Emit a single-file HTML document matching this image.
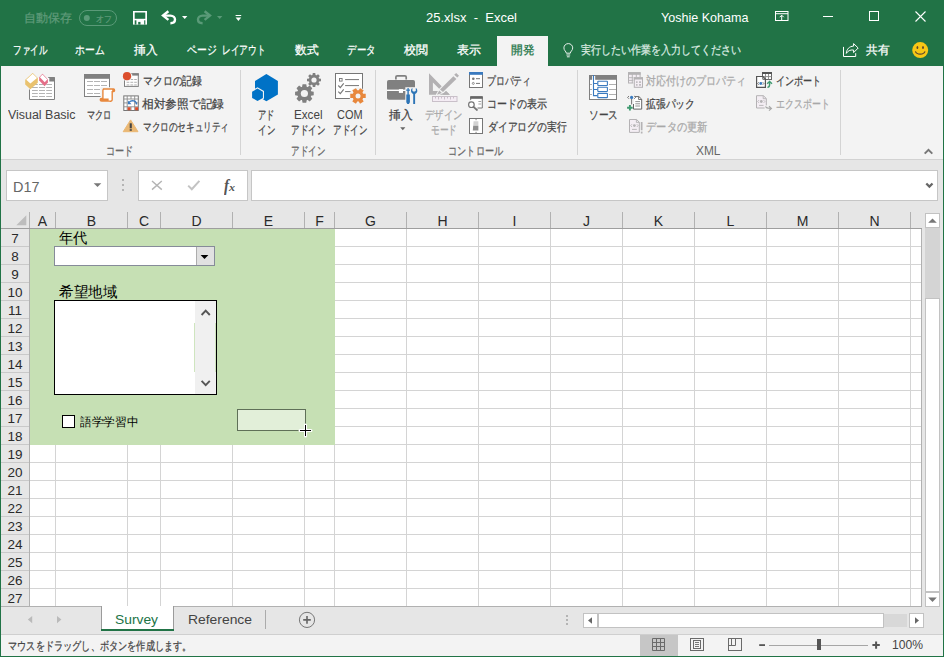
<!DOCTYPE html>
<html lang="ja">
<head>
<meta charset="utf-8">
<title>25.xlsx - Excel</title>
<style>
html,body{margin:0;padding:0}
body{width:944px;height:657px;position:relative;overflow:hidden;background:#e6e6e6;font-family:"Liberation Sans",sans-serif}
body>div,body>svg,body>span{position:absolute}
body>span{white-space:pre;transform-origin:0 50%}
body>span.j{-webkit-text-stroke:0.25px currentColor;white-space:nowrap;text-align:justify;text-align-last:justify}
svg{overflow:visible}
</style>
</head>
<body>
<div style="left:0px;top:0px;width:944px;height:66px;background:#217346;"></div>
<div style="left:0px;top:66px;width:944px;height:93px;background:#f3f3f3;"></div>
<div style="left:0px;top:159px;width:944px;height:1px;background:#d2d2d2;"></div>
<div style="left:0px;top:160px;width:944px;height:474px;background:#e6e6e6;"></div>
<div style="left:0px;top:635px;width:944px;height:22px;background:#f3f3f3;"></div>
<div style="left:0px;top:634px;width:944px;height:1px;background:#cfcfcf;"></div>
<div style="left:497px;top:36px;width:51px;height:30px;background:#f3f3f3;"></div>
<div style="left:240px;top:70px;width:1px;height:85px;background:#d4d4d4;"></div>
<div style="left:375px;top:70px;width:1px;height:85px;background:#d4d4d4;"></div>
<div style="left:577px;top:70px;width:1px;height:85px;background:#d4d4d4;"></div>
<div style="left:840px;top:70px;width:1px;height:85px;background:#d4d4d4;"></div>
<div style="left:6px;top:170px;width:102px;height:31px;background:#fff;border:1px solid #c6c6c6;box-sizing:border-box;"></div>
<div style="left:138px;top:170px;width:110px;height:31px;background:#fff;border:1px solid #c6c6c6;box-sizing:border-box;"></div>
<div style="left:251px;top:170px;width:687px;height:31px;background:#fff;border:1px solid #c6c6c6;box-sizing:border-box;"></div>
<div style="left:122px;top:179px;width:2px;height:2px;background:#b4b4b4;"></div>
<div style="left:122px;top:184px;width:2px;height:2px;background:#b4b4b4;"></div>
<div style="left:122px;top:189px;width:2px;height:2px;background:#b4b4b4;"></div>
<div style="left:30px;top:229px;width:892px;height:378px;background:#fff;"></div>
<div style="left:30px;top:246px;width:891px;height:1px;background:#d4d4d4;"></div><div style="left:1px;top:246px;width:28px;height:1px;background:#c9c9c9;"></div><div style="left:30px;top:264px;width:891px;height:1px;background:#d4d4d4;"></div><div style="left:1px;top:264px;width:28px;height:1px;background:#c9c9c9;"></div><div style="left:30px;top:282px;width:891px;height:1px;background:#d4d4d4;"></div><div style="left:1px;top:282px;width:28px;height:1px;background:#c9c9c9;"></div><div style="left:30px;top:300px;width:891px;height:1px;background:#d4d4d4;"></div><div style="left:1px;top:300px;width:28px;height:1px;background:#c9c9c9;"></div><div style="left:30px;top:318px;width:891px;height:1px;background:#d4d4d4;"></div><div style="left:1px;top:318px;width:28px;height:1px;background:#c9c9c9;"></div><div style="left:30px;top:336px;width:891px;height:1px;background:#d4d4d4;"></div><div style="left:1px;top:336px;width:28px;height:1px;background:#c9c9c9;"></div><div style="left:30px;top:354px;width:891px;height:1px;background:#d4d4d4;"></div><div style="left:1px;top:354px;width:28px;height:1px;background:#c9c9c9;"></div><div style="left:30px;top:372px;width:891px;height:1px;background:#d4d4d4;"></div><div style="left:1px;top:372px;width:28px;height:1px;background:#c9c9c9;"></div><div style="left:30px;top:390px;width:891px;height:1px;background:#d4d4d4;"></div><div style="left:1px;top:390px;width:28px;height:1px;background:#c9c9c9;"></div><div style="left:30px;top:408px;width:891px;height:1px;background:#d4d4d4;"></div><div style="left:1px;top:408px;width:28px;height:1px;background:#c9c9c9;"></div><div style="left:30px;top:426px;width:891px;height:1px;background:#d4d4d4;"></div><div style="left:1px;top:426px;width:28px;height:1px;background:#c9c9c9;"></div><div style="left:30px;top:444px;width:891px;height:1px;background:#d4d4d4;"></div><div style="left:1px;top:444px;width:28px;height:1px;background:#c9c9c9;"></div><div style="left:30px;top:462px;width:891px;height:1px;background:#d4d4d4;"></div><div style="left:1px;top:462px;width:28px;height:1px;background:#c9c9c9;"></div><div style="left:30px;top:480px;width:891px;height:1px;background:#d4d4d4;"></div><div style="left:1px;top:480px;width:28px;height:1px;background:#c9c9c9;"></div><div style="left:30px;top:498px;width:891px;height:1px;background:#d4d4d4;"></div><div style="left:1px;top:498px;width:28px;height:1px;background:#c9c9c9;"></div><div style="left:30px;top:516px;width:891px;height:1px;background:#d4d4d4;"></div><div style="left:1px;top:516px;width:28px;height:1px;background:#c9c9c9;"></div><div style="left:30px;top:534px;width:891px;height:1px;background:#d4d4d4;"></div><div style="left:1px;top:534px;width:28px;height:1px;background:#c9c9c9;"></div><div style="left:30px;top:552px;width:891px;height:1px;background:#d4d4d4;"></div><div style="left:1px;top:552px;width:28px;height:1px;background:#c9c9c9;"></div><div style="left:30px;top:570px;width:891px;height:1px;background:#d4d4d4;"></div><div style="left:1px;top:570px;width:28px;height:1px;background:#c9c9c9;"></div><div style="left:30px;top:588px;width:891px;height:1px;background:#d4d4d4;"></div><div style="left:1px;top:588px;width:28px;height:1px;background:#c9c9c9;"></div><div style="left:55px;top:229px;width:1px;height:377px;background:#d4d4d4;"></div><div style="left:55px;top:212px;width:1px;height:17px;background:#b1b1b1;"></div><div style="left:127px;top:229px;width:1px;height:377px;background:#d4d4d4;"></div><div style="left:127px;top:212px;width:1px;height:17px;background:#b1b1b1;"></div><div style="left:160px;top:229px;width:1px;height:377px;background:#d4d4d4;"></div><div style="left:160px;top:212px;width:1px;height:17px;background:#b1b1b1;"></div><div style="left:232px;top:229px;width:1px;height:377px;background:#d4d4d4;"></div><div style="left:232px;top:212px;width:1px;height:17px;background:#b1b1b1;"></div><div style="left:304px;top:229px;width:1px;height:377px;background:#d4d4d4;"></div><div style="left:304px;top:212px;width:1px;height:17px;background:#b1b1b1;"></div><div style="left:334px;top:229px;width:1px;height:377px;background:#d4d4d4;"></div><div style="left:334px;top:212px;width:1px;height:17px;background:#b1b1b1;"></div><div style="left:406px;top:229px;width:1px;height:377px;background:#d4d4d4;"></div><div style="left:406px;top:212px;width:1px;height:17px;background:#b1b1b1;"></div><div style="left:478px;top:229px;width:1px;height:377px;background:#d4d4d4;"></div><div style="left:478px;top:212px;width:1px;height:17px;background:#b1b1b1;"></div><div style="left:550px;top:229px;width:1px;height:377px;background:#d4d4d4;"></div><div style="left:550px;top:212px;width:1px;height:17px;background:#b1b1b1;"></div><div style="left:622px;top:229px;width:1px;height:377px;background:#d4d4d4;"></div><div style="left:622px;top:212px;width:1px;height:17px;background:#b1b1b1;"></div><div style="left:694px;top:229px;width:1px;height:377px;background:#d4d4d4;"></div><div style="left:694px;top:212px;width:1px;height:17px;background:#b1b1b1;"></div><div style="left:766px;top:229px;width:1px;height:377px;background:#d4d4d4;"></div><div style="left:766px;top:212px;width:1px;height:17px;background:#b1b1b1;"></div><div style="left:838px;top:229px;width:1px;height:377px;background:#d4d4d4;"></div><div style="left:838px;top:212px;width:1px;height:17px;background:#b1b1b1;"></div><div style="left:910px;top:229px;width:1px;height:377px;background:#d4d4d4;"></div><div style="left:910px;top:212px;width:1px;height:17px;background:#b1b1b1;"></div>
<div style="left:29px;top:212px;width:1px;height:395px;background:#b1b1b1;"></div>
<div style="left:1px;top:228px;width:921px;height:1px;background:#9e9e9e;"></div>
<div style="left:921px;top:229px;width:1px;height:378px;background:#b1b1b1;"></div>
<div style="left:1px;top:606px;width:921px;height:1px;background:#b1b1b1;"></div>
<div style="left:30px;top:229px;width:305px;height:216px;background:#c6e0b4;"></div>
<div style="left:54px;top:246px;width:161px;height:20px;background:#fff;border:1px solid #868b99;box-sizing:border-box;"></div>
<div style="left:196px;top:247px;width:18px;height:18px;background:#e1e1e1;"></div>
<div style="left:196px;top:247px;width:1px;height:18px;background:#adadad;"></div>
<div style="left:54px;top:300px;width:163px;height:95px;background:#fff;border:1px solid #000;box-sizing:border-box;"></div>
<div style="left:195px;top:301px;width:21px;height:93px;background:#f0f0f0;"></div>
<div style="left:194px;top:323px;width:1px;height:49px;background:#cfe5bf;"></div>
<div style="left:215px;top:323px;width:1px;height:49px;background:#cfe5bf;"></div>
<div style="left:62px;top:415px;width:13px;height:13px;background:#fff;border:1px solid #000;box-sizing:border-box;"></div>
<div style="left:237px;top:409px;width:69px;height:22px;background:#e2efd9;border:1px solid #5f7058;box-sizing:border-box;"></div>
<div style="left:925px;top:213px;width:15px;height:15px;background:#fff;border:1px solid #c2c2c2;box-sizing:border-box;"></div>
<div style="left:925px;top:228px;width:15px;height:71px;background:#d4d4d4;"></div>
<div style="left:925px;top:298px;width:15px;height:294px;background:#fff;border:1px solid #c2c2c2;box-sizing:border-box;"></div>
<div style="left:925px;top:592px;width:15px;height:15px;background:#fff;border:1px solid #c2c2c2;box-sizing:border-box;"></div>
<div style="left:583px;top:613px;width:15px;height:15px;background:#fff;border:1px solid #c2c2c2;box-sizing:border-box;"></div>
<div style="left:598px;top:613px;width:286px;height:15px;background:#fff;border:1px solid #c2c2c2;box-sizing:border-box;"></div>
<div style="left:884px;top:614px;width:23px;height:13px;background:#d8d8d8;"></div>
<div style="left:909px;top:613px;width:15px;height:15px;background:#fff;border:1px solid #c2c2c2;box-sizing:border-box;"></div>
<div style="left:566px;top:615px;width:2px;height:2px;background:#b4b4b4;"></div>
<div style="left:566px;top:619px;width:2px;height:2px;background:#b4b4b4;"></div>
<div style="left:566px;top:623px;width:2px;height:2px;background:#b4b4b4;"></div>
<div style="left:101px;top:606px;width:73px;height:23px;background:#fff;"></div>
<div style="left:101px;top:629px;width:73px;height:2px;background:#217346;"></div>
<div style="left:101px;top:606px;width:1px;height:23px;background:#9b9b9b;"></div>
<div style="left:173px;top:606px;width:1px;height:23px;background:#9b9b9b;"></div>
<div style="left:265px;top:610px;width:1px;height:19px;background:#ababab;"></div>
<div style="left:640px;top:635px;width:38px;height:21px;background:#c6c6c6;"></div>
<div style="left:769px;top:645px;width:99px;height:1px;background:#a6a6a6;"></div>
<div style="left:817px;top:639px;width:4px;height:11px;background:#555;"></div>
<div style="left:0px;top:0px;width:1.3px;height:657px;background:#217346;"></div>
<div style="left:942.5px;top:0px;width:1.5px;height:657px;background:#217346;"></div>
<div style="left:0px;top:655.7px;width:944px;height:1.3px;background:#217346;"></div>
<svg style="left:79px;top:10px" width="38" height="16" viewBox="0 0 38 16"><rect x="0.5" y="0.5" width="37" height="15" rx="7.5" fill="none" stroke="#5a9a78"/><circle cx="7.8" cy="8" r="3" fill="#5a9a78"/></svg>
<svg style="left:133px;top:11px" width="14" height="14" viewBox="0 0 14 14"><rect x="0" y="0" width="14" height="13.6" fill="#fff"/><rect x="1.7" y="1.5" width="10.6" height="6.3" fill="#217346"/><rect x="1.7" y="9.3" width="1.7" height="4.3" fill="#217346"/><rect x="11.2" y="9.3" width="1.1" height="4.3" fill="#217346"/><rect x="5.2" y="10.9" width="2.3" height="2.7" fill="#217346"/></svg>
<svg style="left:161px;top:10px" width="16" height="15" viewBox="0 0 16 15"><path d="M7.4 1.3 L2 5.6 L7.4 9.9" fill="none" stroke="#fff" stroke-width="2.4" stroke-linejoin="miter"/><path d="M2.6 5.6 H9.4 C12.4 5.6 14 7.6 14 9.6 C14 11.9 12.2 13.3 9.4 13.3" fill="none" stroke="#fff" stroke-width="2.4"/></svg>
<svg style="left:182px;top:16px" width="6" height="3" viewBox="0 0 6 3"><path d="M0 0 H5.4 L2.7 3 Z" fill="#fff"/></svg>
<svg style="left:196px;top:10px" width="16" height="15" viewBox="0 0 16 15"><g transform="translate(16,0) scale(-1,1)"><path d="M7.4 1.3 L2 5.6 L7.4 9.9" fill="none" stroke="#5a9a78" stroke-width="2.4" stroke-linejoin="miter"/><path d="M2.6 5.6 H9.4 C12.4 5.6 14 7.6 14 9.6 C14 11.9 12.2 13.3 9.4 13.3" fill="none" stroke="#5a9a78" stroke-width="2.4"/></g></svg>
<svg style="left:217px;top:16px" width="6" height="3" viewBox="0 0 6 3"><path d="M0 0 H5.4 L2.7 3 Z" fill="#5a9a78"/></svg>
<svg style="left:235px;top:15px" width="7" height="6" viewBox="0 0 7 6"><rect x="0.6" y="0" width="5.6" height="1" fill="#fff"/><path d="M0.6 2.6 H6.2 L3.4 5.9 Z" fill="#fff"/></svg>
<svg style="left:775px;top:11px" width="14" height="10" viewBox="0 0 14 10"><rect x="0.5" y="0.5" width="12.5" height="9" fill="none" stroke="#fff"/><rect x="0.5" y="2.2" width="12.5" height="1" fill="#fff"/><path d="M6.7 9.5 V4.4 M4.7 6.2 L6.7 4.2 L8.7 6.2" fill="none" stroke="#fff"/></svg>
<svg style="left:823px;top:16px" width="10" height="1" viewBox="0 0 10 1"><rect x="0" y="0" width="10" height="1" fill="#fff"/></svg>
<svg style="left:869px;top:11px" width="10" height="10" viewBox="0 0 10 10"><rect x="0.5" y="0.5" width="9" height="9" fill="none" stroke="#fff"/></svg>
<svg style="left:915px;top:11px" width="11" height="11" viewBox="0 0 11 11"><path d="M0.5 0.5 L10.5 10.5 M10.5 0.5 L0.5 10.5" stroke="#fff" stroke-width="1.1" fill="none"/></svg>
<svg style="left:563px;top:43px" width="11" height="15" viewBox="0 0 11 15"><path d="M3.3 10.2 C3.3 8.4 0.9 7.6 0.9 4.9 C0.9 2.4 2.9 0.6 5.3 0.6 C7.7 0.6 9.7 2.4 9.7 4.9 C9.7 7.6 7.3 8.4 7.3 10.2 Z" fill="none" stroke="#e8f1ec" stroke-width="1"/><path d="M3.4 12 H7.2 M3.9 13.8 H6.7" stroke="#e8f1ec" stroke-width="1" fill="none"/></svg>
<svg style="left:843px;top:43px" width="16" height="14" viewBox="0 0 16 14"><path d="M0.5 3.9 V13.5 H12.7 V10.2" fill="none" stroke="#fff"/><path d="M10.6 0.6 L15.2 5 L10.6 9.6 V7 C7 6.6 4.8 8 3.3 10.4 C3.7 6 6.2 3.4 10.6 3.1 Z" fill="none" stroke="#fff" stroke-linejoin="round"/></svg>
<svg style="left:912px;top:42px" width="17" height="17" viewBox="0 0 17 17"><circle cx="8.2" cy="8.1" r="8" fill="#f8c715"/><ellipse cx="5.4" cy="5.6" rx="0.9" ry="1.5" fill="#5b4630"/><ellipse cx="11" cy="5.6" rx="0.9" ry="1.5" fill="#5b4630"/><path d="M3.4 9.3 C4.6 13 11.8 13 13 9.3" fill="none" stroke="#5b4630" stroke-width="1.1"/></svg>
<svg style="left:24px;top:72px" width="32" height="29" viewBox="0 0 32 29"><g transform="translate(-24,-72)"><path d="M29.5 90 V99.5 H54.5 V77.5 H48.2" fill="#fff" stroke="none"/><rect x="30" y="78" width="24.5" height="21.5" fill="#fff"/><rect x="32" y="84" width="5.799999999999997" height="1" fill="#b4b4b4"/><rect x="39" y="84" width="6" height="1" fill="#b4b4b4"/><rect x="46.2" y="84" width="5.799999999999997" height="1" fill="#b4b4b4"/><rect x="32" y="87" width="5.799999999999997" height="1" fill="#b4b4b4"/><rect x="39" y="87" width="6" height="1" fill="#b4b4b4"/><rect x="46.2" y="87" width="5.799999999999997" height="1" fill="#b4b4b4"/><rect x="32" y="90" width="5.799999999999997" height="1" fill="#b4b4b4"/><rect x="39" y="90" width="6" height="1" fill="#b4b4b4"/><rect x="46.2" y="90" width="5.799999999999997" height="1" fill="#b4b4b4"/><rect x="32" y="93" width="5.799999999999997" height="1" fill="#b4b4b4"/><rect x="39" y="93" width="6" height="1" fill="#b4b4b4"/><rect x="46.2" y="93" width="5.799999999999997" height="1" fill="#b4b4b4"/><rect x="32" y="96" width="5.799999999999997" height="1" fill="#b4b4b4"/><rect x="39" y="96" width="6" height="1" fill="#b4b4b4"/><rect x="46.2" y="96" width="5.799999999999997" height="1" fill="#b4b4b4"/><path d="M29.5 89.5 V99.5 H54.5 V77.5 H48.2" fill="none" stroke="#808080"/><rect x="49.3" y="77.3" width="5.5" height="4.2" fill="#808080"/><path d="M25.2 79.8 L32.7 72.9 L37.8 77.9 V82.8 L30.4 89.2 L25.2 84.6 Z" fill="#e9c26f"/><path d="M26.2 79.8 L32.7 73.8 L37 78 L30.4 83.6 Z" fill="#fff"/><path d="M39.2 77.3 L42.5 73.8 L47.9 79.4 V82.6 L44.6 86.2 L39.2 80.4 Z" fill="#e46f89"/><path d="M39.9 77.3 L42.5 74.6 L47.3 79.5 L44.7 82.2 Z" fill="#fff"/></g></svg>
<svg style="left:84px;top:74px" width="32" height="28" viewBox="0 0 32 28"><g transform="translate(-84,-74)"><rect x="84.5" y="74.5" width="25" height="22" fill="#fff" stroke="#808080"/><rect x="84" y="74" width="26" height="4.8" fill="#808080"/><rect x="87" y="81" width="6" height="1" fill="#b4b4b4"/><rect x="94" y="81" width="6" height="1" fill="#b4b4b4"/><rect x="101" y="81" width="6" height="1" fill="#b4b4b4"/><rect x="87" y="85" width="6" height="1" fill="#b4b4b4"/><rect x="94" y="85" width="6" height="1" fill="#b4b4b4"/><rect x="101" y="85" width="6" height="1" fill="#b4b4b4"/><rect x="87" y="89" width="6" height="1" fill="#b4b4b4"/><rect x="94" y="89" width="6" height="1" fill="#b4b4b4"/><rect x="101" y="89" width="6" height="1" fill="#b4b4b4"/><rect x="87" y="93" width="6" height="1" fill="#b4b4b4"/><rect x="94" y="93" width="6" height="1" fill="#b4b4b4"/><rect x="101" y="93" width="6" height="1" fill="#b4b4b4"/><rect x="100.5" y="87.2" width="12" height="15" fill="#f3f3f3"/><path d="M103 89 H113.6 C114.8 89 114.9 91.6 113.6 91.6 H112.2 V99.5 C112.2 101.3 110.4 101.3 109.4 101.1 H101.6 C99.8 101.1 99.8 98.4 101.6 98.4 H102.9 V90.3 C102.9 89.5 103.4 89 104.2 89 Z" fill="#fff" stroke="#e8883d" stroke-width="1.4"/><path d="M101.6 98.4 H108.6 V101.1 H101.6 C99.8 101.1 99.8 98.4 101.6 98.4 Z" fill="#e8883d"/><path d="M112.2 89 H113.6 C114.9 89 114.9 91.6 113.6 91.6 H112.2 Z" fill="#e8883d"/></g></svg>
<svg style="left:251px;top:73px" width="28" height="29" viewBox="0 0 28 29"><g transform="translate(-251,-73)"><path d="M266.4 74.1 L277.9 80.9 V94.6 L266.4 101.2 L255 94.6 V80.9 Z" fill="#0072c6"/><path d="M257.5 87.3 L264 91 V98.6 L257.5 102.2 L251 98.6 V91 Z" fill="#f3f3f3"/><path d="M257.5 88.6 L262.9 91.7 V97.9 L257.5 100.9 L252.1 97.9 V91.7 Z" fill="#0072c6"/></g></svg>
<svg style="left:294px;top:72px" width="28" height="32" viewBox="0 0 28 32"><g transform="translate(-294,-72)"><path d="M302.03 86.91 L302.55 84.18 L306.25 84.18 L306.77 86.91 L307.38 87.17 L309.68 85.60 L312.30 88.22 L310.73 90.52 L310.99 91.13 L313.72 91.65 L313.72 95.35 L310.99 95.87 L310.73 96.48 L312.30 98.78 L309.68 101.40 L307.38 99.83 L306.77 100.09 L306.25 102.82 L302.55 102.82 L302.03 100.09 L301.42 99.83 L299.12 101.40 L296.50 98.78 L298.07 96.48 L297.81 95.87 L295.08 95.35 L295.08 91.65 L297.81 91.13 L298.07 90.52 L296.50 88.22 L299.12 85.60 L301.42 87.17 Z" fill="#808080"/><circle cx="304.4" cy="93.5" r="7.0" fill="#808080"/><circle cx="304.4" cy="93.5" r="3.6" fill="#f3f3f3"/><path d="M312.38 75.27 L312.78 73.01 L315.22 73.01 L315.62 75.27 L316.20 75.51 L318.08 74.19 L319.81 75.92 L318.49 77.80 L318.73 78.38 L320.99 78.78 L320.99 81.22 L318.73 81.62 L318.49 82.20 L319.81 84.08 L318.08 85.81 L316.20 84.49 L315.62 84.73 L315.22 86.99 L312.78 86.99 L312.38 84.73 L311.80 84.49 L309.92 85.81 L308.19 84.08 L309.51 82.20 L309.27 81.62 L307.01 81.22 L307.01 78.78 L309.27 78.38 L309.51 77.80 L308.19 75.92 L309.92 74.19 L311.80 75.51 Z" fill="#808080"/><circle cx="314.0" cy="80.0" r="5.0" fill="#808080"/><circle cx="314.0" cy="80.0" r="2.6" fill="#f3f3f3"/></g></svg>
<svg style="left:335px;top:73px" width="32" height="32" viewBox="0 0 32 32"><g transform="translate(-335,-73)"><rect x="335.5" y="73.5" width="27" height="25" fill="#fff" stroke="#767676"/><rect x="339.5" y="78.5" width="2.6" height="2.6" fill="none" stroke="#767676" stroke-width="0.9"/><path d="M345.1 79.6 H359 M345.1 85.6 H359 M345.1 91.6 H350.7" stroke="#767676" stroke-width="1" fill="none"/><path d="M338.3 85.5 L340.3 87.6 L343.7 83.3 M338.3 91.6 L340.3 93.7 L343.7 89.4" stroke="#767676" stroke-width="1.1" fill="none"/><circle cx="358" cy="95.9" r="8.6" fill="#f3f3f3"/><path d="M358.56 90.53 L360.07 88.17 L363.66 90.24 L362.37 92.73 L362.93 93.70 L365.73 93.83 L365.73 97.97 L362.93 98.10 L362.37 99.07 L363.66 101.56 L360.07 103.63 L358.56 101.27 L357.44 101.27 L355.93 103.63 L352.34 101.56 L353.63 99.07 L353.07 98.10 L350.27 97.97 L350.27 93.83 L353.07 93.70 L353.63 92.73 L352.34 90.24 L355.93 88.17 L357.44 90.53 Z" fill="#e8883d"/><circle cx="358" cy="95.9" r="5.4" fill="#e8883d"/><circle cx="358" cy="95.9" r="2.5" fill="#f3f3f3"/></g></svg>
<svg style="left:387px;top:74px" width="32" height="31" viewBox="0 0 32 31"><g transform="translate(-387,-74)"><path d="M395.9 79.5 V77 C395.9 76.2 396.4 75.8 397.2 75.8 H404.9 C405.7 75.8 406.2 76.2 406.2 77 V79.5" fill="none" stroke="#808080" stroke-width="1.7"/><rect x="387" y="79.9" width="28" height="19.9" rx="1.8" fill="#808080"/><rect x="387" y="89.6" width="19" height="1.4" fill="#fff"/><rect x="398.9" y="89.1" width="4.1" height="3.8" fill="#fff"/><rect x="405.3" y="87.2" width="12.8" height="17" fill="#f3f3f3"/><path d="M407.5 88 H408.7 V89.5 H409.9 V90.8 H408.8 V94.6 H409.9 V102.2 L408.9 104 H407.3 L406.3 102.2 V94.6 H407.4 V90.8 H406.2 V89.5 H407.5 Z" fill="#2e75b6"/><path d="M412.4 88 V90.8 L413.3 91.6 H414.9 L415.8 90.8 V88 C417 88.7 417.3 89.8 417.3 90.9 C417.3 92.3 416.3 93.4 415.1 93.9 V104 H413.2 V93.9 C412 93.4 411 92.3 411 90.9 C411 89.8 411.3 88.7 412.4 88 Z" fill="#2e75b6"/></g></svg>
<svg style="left:428px;top:72px" width="32" height="31" viewBox="0 0 32 31"><g transform="translate(-428,-72)"><path d="M429 73.2 V94.85 H449.9 Z M432.9 82.6 L441.4 91 H432.9 Z" fill="#b3b1b3" fill-rule="evenodd"/><path d="M440 89.6 L453.4 76.2 L456.2 73 L459 75.7 L456.4 79 L443 92.1 L437 94.85 Z" fill="#f3f3f3" stroke="#f3f3f3" stroke-width="2.2" stroke-linejoin="round"/><path d="M440 89.6 L453.4 76.2 L456.4 79 L443 92.1 Z" fill="#b3b1b3"/><path d="M454.2 74.8 L456.2 73 L459 75.7 L457.3 77.6 Z" fill="#b3b1b3"/><path d="M439.2 90.5 L441.9 92.9 L437 94.85 Z" fill="#b3b1b3"/><path d="M442.5 94.85 L446 91.5 L449.9 94.85 Z" fill="#b3b1b3"/><rect x="432.5" y="96.5" width="24.5" height="5" fill="#f4ecf4" stroke="#c9c0c9"/><rect x="435" y="97" width="1" height="1.5" fill="#c9c0c9"/><rect x="438" y="97" width="1" height="2.5" fill="#c9c0c9"/><rect x="441" y="97" width="1" height="1.5" fill="#c9c0c9"/><rect x="444" y="97" width="1" height="2.5" fill="#c9c0c9"/><rect x="447" y="97" width="1" height="1.5" fill="#c9c0c9"/><rect x="450" y="97" width="1" height="2.5" fill="#c9c0c9"/><rect x="453" y="97" width="1" height="1.5" fill="#c9c0c9"/></g></svg>
<svg style="left:469px;top:72px" width="14" height="16" viewBox="0 0 14 16"><g transform="translate(-469,-72)"><rect x="469.5" y="72.5" width="13" height="15" fill="#fff" stroke="#767676"/><rect x="469" y="72" width="14" height="2.8" fill="#3a7abf"/><circle cx="473.3" cy="78.7" r="1.3" fill="#767676"/><circle cx="473.3" cy="83.4" r="1" fill="none" stroke="#767676" stroke-width="0.8"/><path d="M476 78.7 H480 M476 83.4 H480" stroke="#767676" stroke-width="1"/></g></svg>
<svg style="left:468px;top:96px" width="16" height="15" viewBox="0 0 16 15"><g transform="translate(-468,-96)"><path d="M470.7 100 V96.8 H482.3 V108 H477.5" fill="#fff" stroke="#767676"/><rect x="470.2" y="96.3" width="12.6" height="2.5" fill="#666"/><path d="M478.4 101.5 H481.2 M478.4 104 H481.2" stroke="#999" stroke-width="0.9"/><circle cx="471.4" cy="104.7" r="2.8" fill="#fff" stroke="#767676" stroke-width="1.2"/><path d="M473.5 106.8 L477 110" stroke="#767676" stroke-width="1.7" stroke-linecap="round"/></g></svg>
<svg style="left:469px;top:118px" width="14" height="16" viewBox="0 0 14 16"><g transform="translate(-469,-118)"><rect x="469.5" y="118.5" width="13" height="15" fill="#fff" stroke="#767676"/><path d="M473.6 121.3 H478.4 V125.8 H473.2 Z" fill="#d2d2d2"/><path d="M473.2 125.8 H478.4 V130.5 H472.8 Z" fill="#8f8f8f"/><rect x="475.6" y="119" width="0.9" height="1.2" fill="#767676"/><rect x="475.6" y="131.8" width="0.9" height="1.2" fill="#767676"/></g></svg>
<svg style="left:589px;top:75px" width="28" height="25" viewBox="0 0 28 25"><g transform="translate(-589,-75)"><rect x="589.5" y="75.5" width="27" height="24" fill="#fff" stroke="#808080"/><rect x="589" y="75" width="3.1" height="4.8" fill="#808080"/><rect x="595.2" y="75" width="21.8" height="4.8" fill="#808080"/><rect x="590" y="84" width="2" height="1" fill="#b0b0b0"/><rect x="609" y="84" width="7" height="1" fill="#b0b0b0"/><rect x="590" y="89" width="2" height="1" fill="#b0b0b0"/><rect x="609" y="89" width="7" height="1" fill="#b0b0b0"/><rect x="590" y="94" width="2" height="1" fill="#b0b0b0"/><rect x="609" y="94" width="7" height="1" fill="#b0b0b0"/><path d="M593.5 75 V95.6 H597.5 M593.5 83.5 H597.5 M593.5 89.5 H597.5" fill="none" stroke="#3a7abf" stroke-width="1.1"/><rect x="597.8" y="81.3" width="9.6" height="4.2" fill="#fff" stroke="#3a7abf" stroke-width="1.1" rx="0.4"/><rect x="597.8" y="87.3" width="9.6" height="4.2" fill="#fff" stroke="#3a7abf" stroke-width="1.1" rx="0.4"/><rect x="597.8" y="93.4" width="9.6" height="4.2" fill="#fff" stroke="#3a7abf" stroke-width="1.1" rx="0.4"/></g></svg>
<svg style="left:628px;top:72px" width="16" height="16" viewBox="0 0 16 16"><g transform="translate(-628,-72)"><rect x="628.5" y="72.7" width="11.6" height="10.3" fill="#f4eef4" stroke="#b4b2b4"/><rect x="628" y="72.2" width="12.6" height="2.6" fill="#b4b2b4"/><path d="M632.3 74 V83 M636.3 74 V83 M628.5 77.7 H640 M628.5 80.4 H640" stroke="#b4b2b4" stroke-width="0.9"/><rect x="633.3" y="77" width="10" height="11.2" fill="#f3f3f3"/><rect x="634.3" y="77.8" width="8.2" height="9.5" fill="#f4eef4" stroke="#b4b2b4"/><rect x="633.8" y="77.3" width="9.2" height="2.2" fill="#b4b2b4"/><rect x="636" y="81.4" width="1.6" height="1.4" fill="#b4b2b4"/><rect x="639" y="81.4" width="2" height="1.4" fill="#b4b2b4"/><rect x="636" y="84.2" width="1.6" height="1.4" fill="#b4b2b4"/><rect x="639" y="84.2" width="2" height="1.4" fill="#b4b2b4"/></g></svg>
<svg style="left:627px;top:95px" width="16" height="16" viewBox="0 0 16 16"><g transform="translate(-627,-95)"><path d="M633.5 104 V109.1 H641.7 V99.2 L638.9 96.6 H634.8" fill="#fff" stroke="#666"/><path d="M638.6 96.6 V99.5 H641.7" fill="none" stroke="#666" stroke-width="0.9"/><path d="M635.3 101.6 H640 M635.3 103.8 H640 M635.3 106 H640" stroke="#888" stroke-width="0.9"/><path d="M631.6 99 V104.4" stroke="#666" stroke-width="0.9"/><circle cx="631.6" cy="97.4" r="1.6" fill="#3a7abf"/><path d="M629 96 L627.6 97.4 L629 98.8 M634.2 96 L635.6 97.4 L634.2 98.8" fill="none" stroke="#555" stroke-width="0.8"/><path d="M629.9 104.9 V110.5 M627.1 107.7 H632.7" stroke="#3f9a70" stroke-width="1.9"/></g></svg>
<svg style="left:629px;top:118px" width="15" height="17" viewBox="0 0 15 17"><g transform="translate(-629,-118)"><path d="M629.5 119.5 H636.6 L639.3 122.2 V132.4 H629.5 Z" fill="#f4eef4" stroke="#b4b2b4"/><path d="M636.4 119.6 V122.4 H639.2" fill="none" stroke="#b4b2b4" stroke-width="0.9"/><circle cx="634.4" cy="125.6" r="1.4" fill="#b4b2b4"/><path d="M632 124.2 L630.7 125.6 L632 127 M636.8 124.2 L638.1 125.6 L636.8 127" fill="none" stroke="#b4b2b4" stroke-width="0.8"/><path d="M632 129.4 H636.8" stroke="#b4b2b4" stroke-width="0.9"/><rect x="640.8" y="122" width="1.7" height="8.3" fill="#b4b2b4"/><rect x="640.8" y="131.6" width="1.7" height="1.9" fill="#b4b2b4"/></g></svg>
<svg style="left:756px;top:72px" width="17" height="17" viewBox="0 0 17 17"><g transform="translate(-756,-72)"><rect x="762.5" y="72.5" width="9" height="7" fill="#fff" stroke="#666"/><rect x="762" y="72" width="10" height="2" fill="#555"/><path d="M765.5 74 V79.5 M768.5 74 V79.5 M762.5 76.6 H771.5" stroke="#888" stroke-width="0.9"/><path d="M756.6 76.5 H763 L765.4 79 V87.4 H756.6 Z" fill="#fff" stroke="#555" stroke-width="1.2"/><path d="M762.8 76.6 V79.3 H765.4" fill="none" stroke="#555" stroke-width="0.9"/><circle cx="760.8" cy="83.5" r="1.4" fill="#3a7abf"/><path d="M758.9 82.2 L757.7 83.5 L758.9 84.8 M762.7 82.2 L763.9 83.5 L762.7 84.8" fill="none" stroke="#555" stroke-width="0.8"/><path d="M767.4 87.4 C769 87.4 769.6 86.4 769.6 84.6 V82" fill="none" stroke="#3f9a70" stroke-width="1.4"/><path d="M767.2 83.8 L769.6 81.4 L772 83.8" fill="none" stroke="#3f9a70" stroke-width="1.4"/></g></svg>
<svg style="left:756px;top:95px" width="17" height="17" viewBox="0 0 17 17"><g transform="translate(-756,-95)"><path d="M756.5 95.7 H763.4 L766.3 98.5 V108 H756.5 Z" fill="#f4eef4" stroke="#b4b2b4"/><path d="M763.2 95.8 V98.7 H766.2" fill="none" stroke="#b4b2b4" stroke-width="0.9"/><circle cx="761.3" cy="101.5" r="1.4" fill="#b4b2b4"/><path d="M759 100.1 L757.7 101.5 L759 102.9 M763.6 100.1 L764.9 101.5 L763.6 102.9" fill="none" stroke="#b4b2b4" stroke-width="0.8"/><path d="M759.1 105.4 H763.5" stroke="#b4b2b4" stroke-width="0.9"/><rect x="764.6" y="105.4" width="8" height="6" fill="#f3f3f3"/><path d="M765.6 106.4 C765.8 107.9 767 108.4 771 108.4 M769 106.2 L771.4 108.4 L769 110.6" fill="none" stroke="#a8a8a8" stroke-width="1.2"/></g></svg>
<svg style="left:924px;top:148px" width="9" height="6" viewBox="0 0 9 6"><g transform="translate(-924,-148)"><path d="M924.7 153.6 L928.5 149.8 L932.3 153.6" fill="none" stroke="#777" stroke-width="2"/></g></svg>
<svg style="left:93px;top:183px" width="9" height="5" viewBox="0 0 9 5"><g transform="translate(-93,-183)"><path d="M93.7 183.3 H101.3 L97.5 187 Z" fill="#777"/></g></svg>
<svg style="left:151px;top:180px" width="12" height="11" viewBox="0 0 12 11"><g transform="translate(-151,-180)"><path d="M152 181 L161.8 189.6 M161.8 181 L152 189.6" stroke="#b4b4b4" stroke-width="1.4" fill="none"/></g></svg>
<svg style="left:187px;top:180px" width="14" height="11" viewBox="0 0 14 11"><g transform="translate(-187,-180)"><path d="M188.2 185.6 L191.8 189.2 L199.4 180.8" stroke="#c3c3c3" stroke-width="2" fill="none"/></g></svg>
<svg style="left:924px;top:181px" width="10" height="7" viewBox="0 0 10 7"><g transform="translate(-924,-181)"><path d="M926.3 183.4 L929.4 186.6 L932.5 183.4" fill="none" stroke="#666" stroke-width="2.2"/></g></svg>
<svg style="left:16px;top:215px" width="12" height="11" viewBox="0 0 12 11"><g transform="translate(-16,-215)"><path d="M26.3 215.3 V225.3 H16.3 Z" fill="#bdbdbd"/></g></svg>
<svg style="left:200px;top:255px" width="8" height="4" viewBox="0 0 8 4"><g transform="translate(-200,-255)"><path d="M200.6 255 H208.4 L204.5 259 Z" fill="#000"/></g></svg>
<svg style="left:201px;top:309px" width="10" height="7" viewBox="0 0 10 7"><g transform="translate(-201,-309)"><path d="M201.6 315 L205.7 310.6 L209.8 315" fill="none" stroke="#555" stroke-width="1.9"/></g></svg>
<svg style="left:201px;top:380px" width="10" height="7" viewBox="0 0 10 7"><g transform="translate(-201,-380)"><path d="M201.6 380.8 L205.7 385.2 L209.8 380.8" fill="none" stroke="#555" stroke-width="1.9"/></g></svg>
<svg style="left:298px;top:423px" width="15" height="15" viewBox="0 0 15 15"><g transform="translate(-298,-423)"><path d="M300 430.5 H311 M305.5 425 V436" stroke="#fff" stroke-width="3" stroke-linecap="round" fill="none"/><path d="M300 430.5 H311 M305.5 425 V436" stroke="#000" stroke-width="1" fill="none"/></g></svg>
<svg style="left:928px;top:218px" width="9" height="5" viewBox="0 0 9 5"><g transform="translate(-928,-218)"><path d="M928.2 222.8 H936.8 L932.5 218.4 Z" fill="#777"/></g></svg>
<svg style="left:928px;top:597px" width="9" height="5" viewBox="0 0 9 5"><g transform="translate(-928,-597)"><path d="M928.2 597.6 H936.8 L932.5 602 Z" fill="#777"/></g></svg>
<svg style="left:587px;top:616px" width="6" height="9" viewBox="0 0 6 9"><g transform="translate(-587,-616)"><path d="M592 617.2 V623.8 L588 620.5 Z" fill="#666"/></g></svg>
<svg style="left:914px;top:616px" width="6" height="9" viewBox="0 0 6 9"><g transform="translate(-914,-616)"><path d="M915 617.2 V623.8 L919 620.5 Z" fill="#666"/></g></svg>
<svg style="left:27px;top:616px" width="6" height="8" viewBox="0 0 6 8"><g transform="translate(-27,-616)"><path d="M32.2 616 V623.2 L27.8 619.6 Z" fill="#bababa"/></g></svg>
<svg style="left:56px;top:616px" width="6" height="8" viewBox="0 0 6 8"><g transform="translate(-56,-616)"><path d="M57 616 V623.2 L61.4 619.6 Z" fill="#bababa"/></g></svg>
<svg style="left:298px;top:611px" width="18" height="18" viewBox="0 0 18 18"><g transform="translate(-298,-611)"><circle cx="307" cy="619.9" r="7.6" fill="none" stroke="#777" stroke-width="1"/><path d="M303.2 619.9 H310.8 M307 616.1 V623.7" stroke="#666" stroke-width="1.6" fill="none"/></g></svg>
<svg style="left:652px;top:638px" width="13" height="13" viewBox="0 0 13 13"><g transform="translate(-652,-638)"><path d="M652.5 638.5 H664.5 V650.5 H652.5 Z M656.5 638.5 V650.5 M660.5 638.5 V650.5 M652.5 642.5 H664.5 M652.5 646.5 H664.5" fill="none" stroke="#6a6a6a" stroke-width="1"/></g></svg>
<svg style="left:690px;top:638px" width="14" height="13" viewBox="0 0 14 13"><g transform="translate(-690,-638)"><rect x="690.5" y="638.5" width="13" height="12" fill="none" stroke="#6a6a6a"/><rect x="693.5" y="640.5" width="7" height="8" fill="none" stroke="#6a6a6a"/><path d="M695 642.5 H699 M695 644.5 H699 M695 646.5 H699" stroke="#6a6a6a" stroke-width="0.9"/></g></svg>
<svg style="left:728px;top:638px" width="14" height="13" viewBox="0 0 14 13"><g transform="translate(-728,-638)"><rect x="728.5" y="638.5" width="13" height="12" fill="none" stroke="#6a6a6a"/><path d="M731.5 638.5 V645.5 M735.5 638.5 V645.5 M728.5 645.5 H735.5" fill="none" stroke="#6a6a6a"/></g></svg>
<svg style="left:759px;top:644px" width="6" height="2" viewBox="0 0 6 2"><g transform="translate(-759,-644)"><rect x="759.2" y="644.2" width="5.8" height="1.8" fill="#555"/></g></svg>
<svg style="left:873px;top:641px" width="7" height="8" viewBox="0 0 7 8"><g transform="translate(-873,-641)"><path d="M872.4 645.1 H879.8 M876.1 641.4 V648.8" stroke="#555" stroke-width="2"/></g></svg>
<svg style="left:122px;top:72px" width="17" height="16" viewBox="0 0 17 16"><g transform="translate(-122,-72)"><rect x="124.5" y="73.8" width="13.8" height="12.6" fill="#fff" stroke="#808080"/><rect x="132.2" y="73.3" width="6.6" height="2.3" fill="#808080"/><rect x="126.6" y="79" width="2.700000000000017" height="0.9" fill="#a8a8a8"/><rect x="130.4" y="79" width="2.799999999999983" height="0.9" fill="#a8a8a8"/><rect x="134.2" y="79" width="2.6000000000000227" height="0.9" fill="#a8a8a8"/><rect x="126.6" y="81.8" width="2.700000000000017" height="0.9" fill="#a8a8a8"/><rect x="130.4" y="81.8" width="2.799999999999983" height="0.9" fill="#a8a8a8"/><rect x="134.2" y="81.8" width="2.6000000000000227" height="0.9" fill="#a8a8a8"/><rect x="126.6" y="84.5" width="2.700000000000017" height="0.9" fill="#a8a8a8"/><rect x="130.4" y="84.5" width="2.799999999999983" height="0.9" fill="#a8a8a8"/><rect x="134.2" y="84.5" width="2.6000000000000227" height="0.9" fill="#a8a8a8"/><circle cx="127" cy="76.2" r="5" fill="#f3f3f3"/><circle cx="127" cy="76.2" r="4.1" fill="#dc4e2c"/></g></svg>
<svg style="left:123px;top:95px" width="16" height="16" viewBox="0 0 16 16"><g transform="translate(-123,-95)"><rect x="123.8" y="95.9" width="14.5" height="14.6" fill="#fff" stroke="#767676"/><path d="M127.2 96 V110.4 M134.7 96 V110.4 M131 96 V99 M131 106.8 V110.4 M124 99 H138.2 M124 106.8 H138.2 M124 102.9 H127.2 M134.7 102.9 H138.2" stroke="#8a8a8a" stroke-width="0.9" fill="none"/><rect x="127.6" y="107.2" width="3" height="3" fill="#dc4e2c"/><rect x="135.1" y="107.2" width="3" height="3" fill="#dc4e2c"/><path d="M136.6 104.6 C136.6 100.4 131.6 99.6 129 102.4" fill="none" stroke="#3a7abf" stroke-width="1.3"/><path d="M127.9 100.6 V104.2 H131.5 Z" fill="#3a7abf"/></g></svg>
<svg style="left:122px;top:119px" width="17" height="14" viewBox="0 0 17 14"><g transform="translate(-122,-119)"><path d="M130.6 119.9 L138 131.7 H123.2 Z" fill="#eab874" stroke="#eab874" stroke-width="1" stroke-linejoin="round"/><rect x="129.7" y="123.3" width="2.1" height="5" fill="#444"/><rect x="129.7" y="129.2" width="2.1" height="1.6" fill="#444"/></g></svg>
<svg style="left:400px;top:127px" width="6" height="4" viewBox="0 0 6 4"><g transform="translate(-400,-127)"><path d="M400.2 127.2 H405.4 L402.8 130.2 Z" fill="#666"/></g></svg>
<span class="j" style="top:9.5px;font-size:12px;line-height:16px;color:#5f9a79;left:23.5px;transform:scaleX(1.0000);width:48.05px;">自動保存</span>
<span class="j" style="top:12.5px;font-size:9px;line-height:12px;color:#5f9a79;left:96px;transform:scaleX(0.8889);width:18.05px;">オフ</span>
<span style="top:9px;font-size:13px;line-height:17px;color:#fff;left:425.5px;transform:scaleX(0.9997);">25.xlsx  -  Excel</span>
<span style="top:9px;font-size:13px;line-height:17px;color:#fff;left:660.5px;transform:scaleX(0.9659);">Yoshie Kohama</span>
<span class="j" style="top:42px;font-size:12px;line-height:16px;color:#fff;left:12.5px;transform:scaleX(0.7083);width:48.05px;">ファイル</span>
<span class="j" style="top:42px;font-size:12px;line-height:16px;color:#fff;left:75px;transform:scaleX(0.8194);width:36.05px;">ホーム</span>
<span class="j" style="top:42px;font-size:12px;line-height:16px;color:#fff;left:134px;transform:scaleX(0.9792);width:24.05px;">挿入</span>
<span class="j" style="top:42px;font-size:12px;line-height:16px;color:#fff;left:187px;transform:scaleX(0.8194);width:36.05px;">ページ</span>
<span class="j" style="top:42px;font-size:12px;line-height:16px;color:#fff;left:221.5px;transform:scaleX(0.7250);width:60.05px;">レイアウト</span>
<span class="j" style="top:42px;font-size:12px;line-height:16px;color:#fff;left:294.5px;transform:scaleX(0.9792);width:24.05px;">数式</span>
<span class="j" style="top:42px;font-size:12px;line-height:16px;color:#fff;left:347px;transform:scaleX(0.7917);width:36.05px;">データ</span>
<span class="j" style="top:42px;font-size:12px;line-height:16px;color:#fff;left:404px;transform:scaleX(1.0000);width:24.05px;">校閲</span>
<span class="j" style="top:42px;font-size:12px;line-height:16px;color:#fff;left:457px;transform:scaleX(1.0000);width:24.05px;">表示</span>
<span class="j" style="top:42px;font-size:12px;line-height:16px;color:#217346;left:510.5px;transform:scaleX(0.9792);width:24.05px;">開発</span>
<span class="j" style="top:42px;font-size:12px;line-height:16px;color:#dcebe2;left:580.5px;transform:scaleX(0.8307);width:192.05px;">実行したい作業を入力してください</span>
<span class="j" style="top:42px;font-size:12px;line-height:16px;color:#fff;left:866px;transform:scaleX(0.9792);width:24.05px;">共有</span>
<span style="top:106.5px;font-size:12px;line-height:16px;color:#444;left:7.5px;transform:scaleX(1.0360);">Visual Basic</span>
<span class="j" style="top:106.5px;font-size:12px;line-height:16px;color:#444;left:86.5px;transform:scaleX(0.6806);width:36.05px;">マクロ</span>
<span class="j" style="top:73px;font-size:12px;line-height:16px;color:#444;left:142.5px;transform:scaleX(0.8194);width:72.05px;">マクロの記録</span>
<span class="j" style="top:96px;font-size:12px;line-height:16px;color:#444;left:142px;transform:scaleX(0.9762);width:84.05px;">相対参照で記録</span>
<span class="j" style="top:119px;font-size:12px;line-height:16px;color:#444;left:142.5px;transform:scaleX(0.7167);width:120.05px;">マクロのセキュリティ</span>
<span class="j" style="top:143px;font-size:12px;line-height:16px;color:#666;left:106px;transform:scaleX(0.7639);width:36.05px;">コード</span>
<span class="j" style="top:106.5px;font-size:12px;line-height:16px;color:#444;left:257.5px;transform:scaleX(0.6875);width:24.05px;">アド</span>
<span class="j" style="top:121.5px;font-size:12px;line-height:16px;color:#444;left:257.5px;transform:scaleX(0.7083);width:24.05px;">イン</span>
<span style="top:106.5px;font-size:12px;line-height:16px;color:#444;left:293.5px;transform:scaleX(0.9712);">Excel</span>
<span class="j" style="top:121.5px;font-size:12px;line-height:16px;color:#444;left:290.5px;transform:scaleX(0.7083);width:48.05px;">アドイン</span>
<span style="top:106.5px;font-size:12px;line-height:16px;color:#444;left:336.5px;transform:scaleX(0.9107);">COM</span>
<span class="j" style="top:121.5px;font-size:12px;line-height:16px;color:#444;left:333px;transform:scaleX(0.7083);width:48.05px;">アドイン</span>
<span class="j" style="top:143px;font-size:12px;line-height:16px;color:#666;left:290.5px;transform:scaleX(0.7083);width:48.05px;">アドイン</span>
<span class="j" style="top:106.5px;font-size:12px;line-height:16px;color:#444;left:389px;transform:scaleX(0.9792);width:24.05px;">挿入</span>
<span class="j" style="top:106.5px;font-size:12px;line-height:16px;color:#a8a8a8;left:424.5px;transform:scaleX(0.7708);width:48.05px;">デザイン</span>
<span class="j" style="top:121.5px;font-size:12px;line-height:16px;color:#a8a8a8;left:431px;transform:scaleX(0.7222);width:36.05px;">モード</span>
<span class="j" style="top:73px;font-size:12px;line-height:16px;color:#444;left:487px;transform:scaleX(0.7333);width:60.05px;">プロパティ</span>
<span class="j" style="top:96px;font-size:12px;line-height:16px;color:#444;left:487px;transform:scaleX(0.8333);width:72.05px;">コードの表示</span>
<span class="j" style="top:119px;font-size:12px;line-height:16px;color:#444;left:487.5px;transform:scaleX(0.8177);width:96.05px;">ダイアログの実行</span>
<span class="j" style="top:143px;font-size:12px;line-height:16px;color:#666;left:447.5px;transform:scaleX(0.7639);width:72.05px;">コントロール</span>
<span class="j" style="top:106.5px;font-size:12px;line-height:16px;color:#444;left:588.5px;transform:scaleX(0.8056);width:36.05px;">ソース</span>
<span class="j" style="top:73px;font-size:12px;line-height:16px;color:#a8a8a8;left:646px;transform:scaleX(0.8292);width:120.05px;">対応付けのプロパティ</span>
<span class="j" style="top:96px;font-size:12px;line-height:16px;color:#444;left:646px;transform:scaleX(0.8167);width:60.05px;">拡張パック</span>
<span class="j" style="top:119px;font-size:12px;line-height:16px;color:#a8a8a8;left:646px;transform:scaleX(0.8542);width:72.05px;">データの更新</span>
<span class="j" style="top:73px;font-size:12px;line-height:16px;color:#444;left:775.5px;transform:scaleX(0.7583);width:60.05px;">インポート</span>
<span class="j" style="top:96px;font-size:12px;line-height:16px;color:#a8a8a8;left:775.5px;transform:scaleX(0.7431);width:72.05px;">エクスポート</span>
<span style="top:143px;font-size:12px;line-height:16px;color:#666;left:696px;transform:scaleX(0.9924);">XML</span>
<span style="top:177.5px;font-size:14.5px;line-height:19px;color:#666;left:13px;transform:scaleX(0.9959);">D17</span>
<span style="top:174.5px;font-size:16px;line-height:21px;color:#555;font-family:'Liberation Serif',serif;font-style:italic;font-weight:bold;left:224px;transform:scaleX(0.9384);">f</span>
<span style="top:180px;font-size:11px;line-height:14px;color:#555;font-family:'Liberation Serif',serif;font-style:italic;font-weight:bold;left:228.5px;transform:scaleX(1.0909);">x</span>
<span style="top:212px;font-size:14px;line-height:18px;color:#2a2a2a;left:22.5px;width:40px;text-align:center;">A</span>
<span style="top:212px;font-size:14px;line-height:18px;color:#2a2a2a;left:71.5px;width:40px;text-align:center;">B</span>
<span style="top:212px;font-size:14px;line-height:18px;color:#2a2a2a;left:124px;width:40px;text-align:center;">C</span>
<span style="top:212px;font-size:14px;line-height:18px;color:#2a2a2a;left:176.5px;width:40px;text-align:center;">D</span>
<span style="top:212px;font-size:14px;line-height:18px;color:#2a2a2a;left:248.5px;width:40px;text-align:center;">E</span>
<span style="top:212px;font-size:14px;line-height:18px;color:#2a2a2a;left:299.5px;width:40px;text-align:center;">F</span>
<span style="top:212px;font-size:14px;line-height:18px;color:#2a2a2a;left:350.5px;width:40px;text-align:center;">G</span>
<span style="top:212px;font-size:14px;line-height:18px;color:#2a2a2a;left:422.5px;width:40px;text-align:center;">H</span>
<span style="top:212px;font-size:14px;line-height:18px;color:#2a2a2a;left:494.5px;width:40px;text-align:center;">I</span>
<span style="top:212px;font-size:14px;line-height:18px;color:#2a2a2a;left:566.5px;width:40px;text-align:center;">J</span>
<span style="top:212px;font-size:14px;line-height:18px;color:#2a2a2a;left:638.5px;width:40px;text-align:center;">K</span>
<span style="top:212px;font-size:14px;line-height:18px;color:#2a2a2a;left:710.5px;width:40px;text-align:center;">L</span>
<span style="top:212px;font-size:14px;line-height:18px;color:#2a2a2a;left:782.5px;width:40px;text-align:center;">M</span>
<span style="top:212px;font-size:14px;line-height:18px;color:#2a2a2a;left:854.5px;width:40px;text-align:center;">N</span>
<span style="top:230px;font-size:13.5px;line-height:18px;color:#2a2a2a;left:1px;width:28px;text-align:center;">7</span>
<span style="top:248px;font-size:13.5px;line-height:18px;color:#2a2a2a;left:1px;width:28px;text-align:center;">8</span>
<span style="top:266px;font-size:13.5px;line-height:18px;color:#2a2a2a;left:1px;width:28px;text-align:center;">9</span>
<span style="top:284px;font-size:13.5px;line-height:18px;color:#2a2a2a;left:1px;width:28px;text-align:center;">10</span>
<span style="top:302px;font-size:13.5px;line-height:18px;color:#2a2a2a;left:1px;width:28px;text-align:center;">11</span>
<span style="top:320px;font-size:13.5px;line-height:18px;color:#2a2a2a;left:1px;width:28px;text-align:center;">12</span>
<span style="top:338px;font-size:13.5px;line-height:18px;color:#2a2a2a;left:1px;width:28px;text-align:center;">13</span>
<span style="top:356px;font-size:13.5px;line-height:18px;color:#2a2a2a;left:1px;width:28px;text-align:center;">14</span>
<span style="top:374px;font-size:13.5px;line-height:18px;color:#2a2a2a;left:1px;width:28px;text-align:center;">15</span>
<span style="top:392px;font-size:13.5px;line-height:18px;color:#2a2a2a;left:1px;width:28px;text-align:center;">16</span>
<span style="top:410px;font-size:13.5px;line-height:18px;color:#2a2a2a;left:1px;width:28px;text-align:center;">17</span>
<span style="top:428px;font-size:13.5px;line-height:18px;color:#2a2a2a;left:1px;width:28px;text-align:center;">18</span>
<span style="top:446px;font-size:13.5px;line-height:18px;color:#2a2a2a;left:1px;width:28px;text-align:center;">19</span>
<span style="top:464px;font-size:13.5px;line-height:18px;color:#2a2a2a;left:1px;width:28px;text-align:center;">20</span>
<span style="top:482px;font-size:13.5px;line-height:18px;color:#2a2a2a;left:1px;width:28px;text-align:center;">21</span>
<span style="top:500px;font-size:13.5px;line-height:18px;color:#2a2a2a;left:1px;width:28px;text-align:center;">22</span>
<span style="top:518px;font-size:13.5px;line-height:18px;color:#2a2a2a;left:1px;width:28px;text-align:center;">23</span>
<span style="top:536px;font-size:13.5px;line-height:18px;color:#2a2a2a;left:1px;width:28px;text-align:center;">24</span>
<span style="top:554px;font-size:13.5px;line-height:18px;color:#2a2a2a;left:1px;width:28px;text-align:center;">25</span>
<span style="top:572px;font-size:13.5px;line-height:18px;color:#2a2a2a;left:1px;width:28px;text-align:center;">26</span>
<span style="top:590px;font-size:13.5px;line-height:18px;color:#2a2a2a;left:1px;width:28px;text-align:center;">27</span>
<span class="j" style="top:229px;font-size:14.5px;line-height:19px;color:#000;-webkit-text-stroke:0;left:59px;transform:scaleX(0.9500);width:30.05px;">年代</span>
<span class="j" style="top:283px;font-size:14.5px;line-height:19px;color:#000;-webkit-text-stroke:0;left:59px;transform:scaleX(0.9667);width:60.05px;">希望地域</span>
<span class="j" style="top:413.5px;font-size:12px;line-height:16px;color:#000;-webkit-text-stroke:0;left:79.5px;transform:scaleX(0.9750);width:60.05px;">語学学習中</span>
<span style="top:611px;font-size:13px;line-height:17px;color:#217346;left:115px;transform:scaleX(1.0625);">Survey</span>
<span style="top:611px;font-size:13px;line-height:17px;color:#444;left:187.5px;transform:scaleX(1.0669);">Reference</span>
<span class="j" style="top:637.5px;font-size:12px;line-height:16px;color:#444;left:7.5px;transform:scaleX(0.7646);width:240.05px;">マウスをドラッグし、ボタンを作成します。</span>
<span style="top:637px;font-size:12px;line-height:16px;color:#444;left:892px;transform:scaleX(1.0097);">100%</span>
</body>
</html>
